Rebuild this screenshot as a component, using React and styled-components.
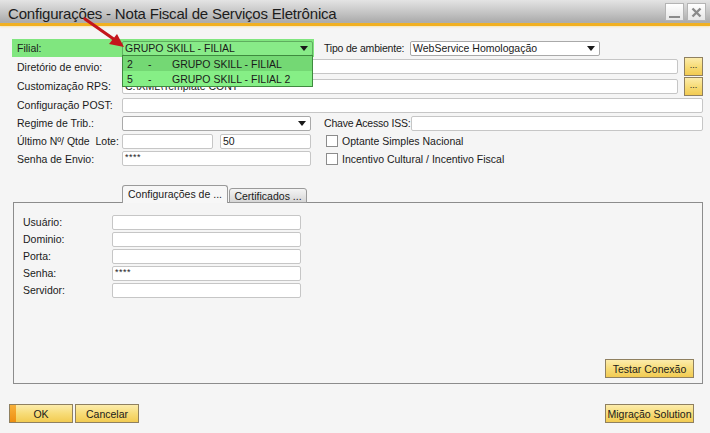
import React from "react";
import styled, { createGlobalStyle, css } from "styled-components";

const Global = createGlobalStyle`
  html, body { margin: 0; padding: 0; background: #f5f5f5; }
  body { font-family: "Liberation Sans", Arial, sans-serif; font-size: 10.5px; color: #1a1a1a; }
  * { box-sizing: border-box; }
`;

const Window = styled.div`
  position: relative;
  width: 710px;
  height: 433px;
  display: flex;
  flex-direction: column;
  background: #f5f5f5;
  overflow: hidden;
`;

const TitleBar = styled.div`
  height: 23px;
  display: flex;
  align-items: center;
  justify-content: space-between;
  padding: 0 4px 0 8px;
  background: linear-gradient(#e4e4e4, #c4c4c4 55%, #a9a9a9);
`;

const Title = styled.div`
  font-size: 15px;
  letter-spacing: -0.2px;
  color: #1c1c1c;
  padding-top: 3px;
`;

const WinButtons = styled.div`
  display: flex;
  gap: 3px;
  align-self: flex-start;
  margin-top: 3px;
`;

const WinBtn = styled.div`
  width: 19px;
  height: 18px;
  display: flex;
  align-items: center;
  justify-content: center;
  background: linear-gradient(#ffffff, #e6e6e6);
  border: 1px solid #b4b4b4;
`;

const Accent = styled.div`
  height: 3px;
  background: #f1b021;
  box-shadow: 0 1px 2px #f9e4b4;
`;

const Content = styled.div`
  padding: 13px 7px 0 12px;
  display: flex;
  flex-direction: column;
`;

const FormGrid = styled.div`
  display: grid;
  grid-template-columns: 110px 192px 10px 87px 1fr;
  grid-template-rows: 18px 19px 20px 18px 18px 18px 17px;
  align-items: center;
`;

const Label = styled.div`
  padding-left: ${(p) => (p.right ? 0 : 5)}px;
  width: ${(p) => (p.right ? "auto" : "110px")};
  letter-spacing: ${(p) => (p.right ? "-0.2px" : "0")};
  white-space: nowrap;
  grid-column: ${(p) => (p.right ? "4" : "1")};
`;

const Highlight = styled.div`
  grid-column: 1 / 3;
  align-self: stretch;
  display: flex;
  align-items: center;
  background: #80e67f;
`;

const fieldBase = css`
  height: 15px;
  border: 1px solid #c6c6c6;
  border-radius: 2px;
  background: #fff;
  display: flex;
  align-items: center;
  padding-left: 2px;
  white-space: nowrap;
  overflow: hidden;
  font-size: 10.5px;
`;

const Field = styled.div`
  ${fieldBase};
  grid-column: ${(p) => p.col || "2 / 6"};
  width: ${(p) => (p.w ? `${p.w}px` : "auto")};
`;

const Combo = styled.div`
  ${fieldBase};
  position: relative;
  grid-column: ${(p) => p.col || "2"};
  width: ${(p) => p.w}px;
  margin-left: ${(p) => p.shift || 0}px;
  border-color: ${(p) => (p.green ? "#5fae5f" : "#a9a9a9")};
  background: ${(p) => (p.green ? "#88eb88" : "#fff")};
  justify-content: space-between;
  padding-right: 4px;
`;

const Caret = styled.span`
  width: 0;
  height: 0;
  border-left: 4px solid transparent;
  border-right: 4px solid transparent;
  border-top: 5px solid #1a1a1a;
`;

const FieldWithButton = styled.div`
  grid-column: 2 / 6;
  display: flex;
  align-items: center;
  gap: 6px;
`;

const Grow = styled.div`
  ${fieldBase};
  flex: 1;
`;

const TwoFields = styled.div`
  grid-column: 2;
  display: flex;
  gap: 7px;
  width: 189px;
`;

const Half = styled.div`
  ${fieldBase};
  flex: 1;
`;

const Masked = styled.span`
  font-size: 9px;
  letter-spacing: 0.5px;
  margin-top: -3px;
`;

const yellow = css`
  background: linear-gradient(#fcecac, #f7dc78 50%, #f2cb52);
  border: 1px solid #8f8060;
  color: #1a1a1a;
  display: flex;
  align-items: center;
  justify-content: center;
  font-size: 10.5px;
`;

const DotsBtn = styled.div`
  ${yellow};
  width: 19px;
  height: 19px;
  font-size: 9px;
  padding-bottom: 3px;
`;

const CheckRow = styled.div`
  grid-column: 4 / 6;
  display: flex;
  align-items: center;
  gap: 4px;
  padding-left: 2px;
`;

const Check = styled.span`
  width: 12px;
  height: 12px;
  border: 1px solid #8c8c8c;
  background: #fff;
`;

const DropList = styled.div`
  position: absolute;
  left: 122px;
  top: 55px;
  width: 191px;
  border: 1px solid #3f8a3f;
  background: #86ef86;
  z-index: 5;
`;

const DropItem = styled.div`
  height: 15px;
  display: flex;
  align-items: center;
  padding-left: 4px;
  background: ${(p) => (p.sel ? "#74d874" : "#86ef86")};
`;

const Code = styled.span`
  width: 21px;
`;
const Dash = styled.span`
  width: 24px;
`;

const Tabs = styled.div`
  display: flex;
  align-items: flex-end;
  margin: 18px 0 0 110px;
  height: 18px;
  position: relative;
  z-index: 2;
`;

const Tab = styled.div`
  height: ${(p) => (p.active ? 18 : 15)}px;
  width: ${(p) => p.w}px;
  border: 1px solid #9a9a9a;
  border-bottom: ${(p) => (p.active ? "none" : "1px solid #9a9a9a")};
  border-radius: 3px 3px 0 0;
  background: ${(p) => (p.active ? "#f7f7f7" : "linear-gradient(#f4f4f4, #d6d6d6)")};
  display: flex;
  align-items: center;
  justify-content: center;
  margin-left: ${(p) => (p.active ? 0 : 1)}px;
  padding-bottom: ${(p) => (p.active ? 2 : 0)}px;
`;

const Panel = styled.div`
  margin: -1px 0 0 1px;
  height: 182px;
  border: 1px solid #8c8c8c;
  display: flex;
  flex-direction: column;
  padding: 12px 8px 5px 9px;
`;

const PanelGrid = styled.div`
  display: grid;
  grid-template-columns: 89px 189px;
  grid-auto-rows: 17px;
  align-items: start;
`;

const PanelLabel = styled.div`
  padding-top: 1px;
`;

const PanelField = styled.div`
  ${fieldBase};
`;

const PanelFooter = styled.div`
  margin-top: auto;
  display: flex;
  justify-content: flex-end;
`;

const Button = styled.div`
  ${yellow};
  width: ${(p) => p.w}px;
  height: 19px;
  position: relative;
  ${(p) =>
    p.primary &&
    css`
      &::before {
        content: "";
        position: absolute;
        left: 0;
        top: 0;
        bottom: 0;
        width: 6px;
        background: linear-gradient(#f7b03a, #ee8f12);
      }
    `}
`;

const Footer = styled.div`
  margin-top: auto;
  padding: 0 16px 10px 9px;
  display: flex;
  gap: 2px;
`;

const Spacer = styled.div`
  flex: 1;
`;

const ArrowSvg = styled.svg`
  position: absolute;
  left: 0;
  top: 0;
  pointer-events: none;
  z-index: 10;
`;

export default function App() {
  return (
    <>
      <Global />
      <Window>
        <TitleBar>
          <Title>Configurações - Nota Fiscal de Serviços Eletrônica</Title>
          <WinButtons>
            <WinBtn>
              <svg width="13" height="13" viewBox="0 0 13 13">
                <rect x="1" y="10" width="11" height="2" fill="#8a8a8a" />
              </svg>
            </WinBtn>
            <WinBtn>
              <svg width="13" height="13" viewBox="0 0 13 13">
                <path d="M2.5 2.5 L10.5 10.5 M10.5 2.5 L2.5 10.5" stroke="#8a8a8a" strokeWidth="2.4" />
              </svg>
            </WinBtn>
          </WinButtons>
        </TitleBar>
        <Accent />
        <Content>
          <FormGrid>
            <Highlight>
              <Label>Filial:</Label>
              <Combo w={191} green>
                <span>GRUPO SKILL - FILIAL</span>
                <Caret />
              </Combo>
            </Highlight>
            <Label right>Tipo de ambiente:</Label>
            <Combo col="5" w={190} shift={-1}>
              <span>WebService Homologação</span>
              <Caret />
            </Combo>

            <Label>Diretório de envio:</Label>
            <FieldWithButton>
              <Grow />
              <DotsBtn>...</DotsBtn>
            </FieldWithButton>

            <Label>Customização RPS:</Label>
            <FieldWithButton>
              <Grow>C:\XML\Template CONT</Grow>
              <DotsBtn>...</DotsBtn>
            </FieldWithButton>

            <Label>Configuração POST:</Label>
            <Field />

            <Label>Regime de Trib.:</Label>
            <Combo w={189}>
              <span />
              <Caret />
            </Combo>
            <Label right>Chave Acesso ISS:</Label>
            <Field col="5" />

            <Label>Último Nº/ Qtde&nbsp; Lote:</Label>
            <TwoFields>
              <Half />
              <Half>50</Half>
            </TwoFields>
            <CheckRow>
              <Check />
              <span>Optante Simples Nacional</span>
            </CheckRow>

            <Label>Senha de Envio:</Label>
            <Field col="2" w={189}>
              <Masked>****</Masked>
            </Field>
            <CheckRow>
              <Check />
              <span>Incentivo Cultural / Incentivo Fiscal</span>
            </CheckRow>
          </FormGrid>

          <Tabs>
            <Tab active w={106}>Configurações de ...</Tab>
            <Tab w={78}>Certificados ...</Tab>
          </Tabs>
          <Panel>
            <PanelGrid>
              <PanelLabel>Usuário:</PanelLabel>
              <PanelField />
              <PanelLabel>Dominio:</PanelLabel>
              <PanelField />
              <PanelLabel>Porta:</PanelLabel>
              <PanelField />
              <PanelLabel>Senha:</PanelLabel>
              <PanelField>
                <Masked>****</Masked>
              </PanelField>
              <PanelLabel>Servidor:</PanelLabel>
              <PanelField />
            </PanelGrid>
            <PanelFooter>
              <Button w={89}>Testar Conexão</Button>
            </PanelFooter>
          </Panel>
        </Content>
        <Footer>
          <Button primary w={64}>OK</Button>
          <Button w={64}>Cancelar</Button>
          <Spacer />
          <Button w={89}>Migração Solution</Button>
        </Footer>

        <DropList>
          <DropItem sel>
            <Code>2</Code>
            <Dash>-</Dash>
            <span>GRUPO SKILL - FILIAL</span>
          </DropItem>
          <DropItem>
            <Code>5</Code>
            <Dash>-</Dash>
            <span>GRUPO SKILL - FILIAL 2</span>
          </DropItem>
        </DropList>

        <ArrowSvg width="710" height="433">
          <line x1="85" y1="19" x2="115" y2="40" stroke="#c4151c" strokeWidth="3.2" strokeLinecap="round" />
          <polygon points="124,47 109,44 117,34" fill="#c4151c" />
        </ArrowSvg>
      </Window>
    </>
  );
}
